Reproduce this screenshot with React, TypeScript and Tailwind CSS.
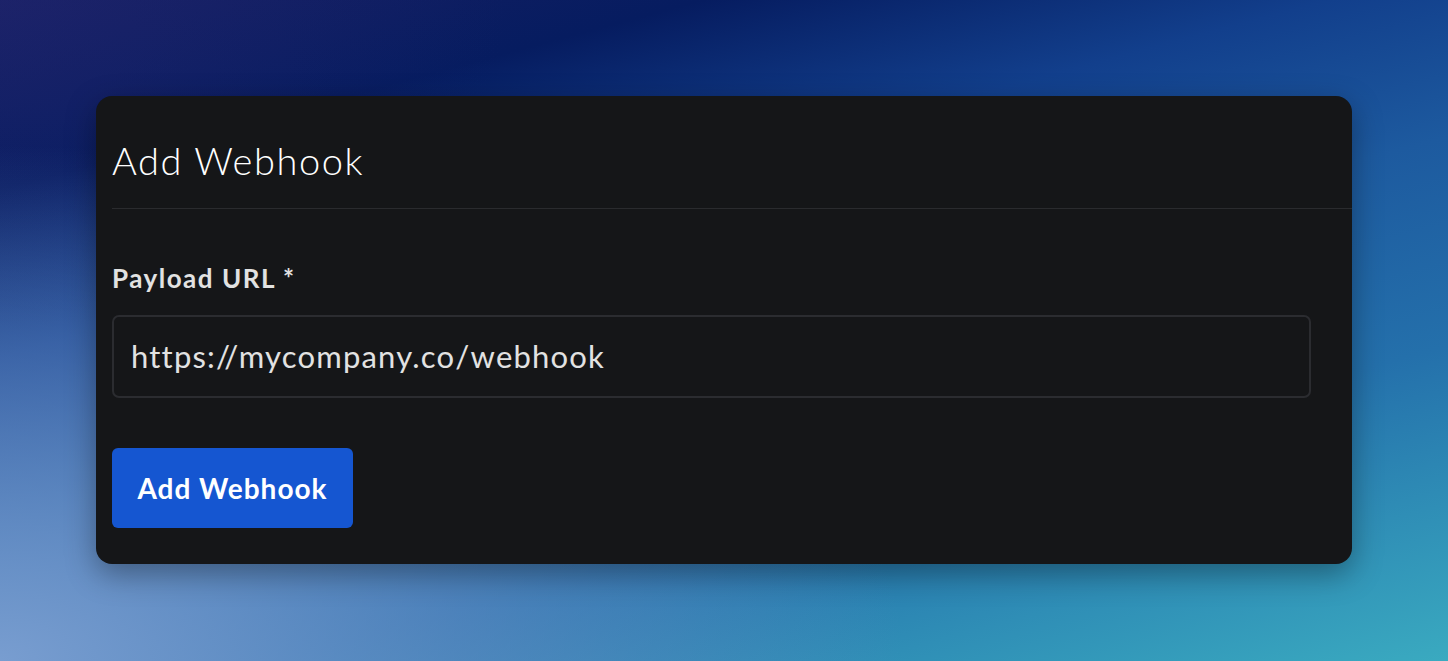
import React from "react";

export default function App() {
  return (
    <div
      className="w-[1448px] h-[661px] overflow-hidden flex items-start justify-center px-[96px] pt-[96px] bg-[radial-gradient(ellipse_80%_100%_at_0%_100%,rgba(125,160,210,0.95)_0%,rgba(110,145,200,0.55)_40%,rgba(100,130,190,0)_78%),radial-gradient(ellipse_35%_50%_at_0%_0%,rgba(35,40,115,0.4)_0%,rgba(35,40,115,0)_100%),linear-gradient(165deg,#181f63_0%,#061c60_18%,#123f8c_34%,#1d5a9f_50%,#2470ab_70%,#2f8eb6_85%,#3aaac0_100%)]"
      style={{ fontFamily: "Lato, 'Noto Sans', sans-serif" }}
    >
      <div className="w-full h-[468px] bg-[#151618] rounded-[16px] shadow-[0_10px_30px_rgba(0,0,0,0.35)] flex flex-col">
        <div className="ml-4 h-[113px] pt-4 flex items-center border-b border-[#2a2b2e]">
          <h1 className="text-[38px] font-light text-white leading-none tracking-[1.6px]">
            Add Webhook
          </h1>
        </div>
        <div className="pl-4 pr-[41px] pt-[54px] flex flex-col">
          <label className="text-[26px] font-bold text-[#e2e2e2] leading-[30px] tracking-[1.5px]">
            Payload URL *
          </label>
          <div className="mt-[22px] h-[83px] border-2 border-[#2b2c30] rounded-[7px] flex items-center px-[17px]">
            <span className="text-[31px] text-[#e2e2e2] tracking-[1.2px]">
              https://mycompany.co/webhook
            </span>
          </div>
          <button className="mt-[50px] w-[241px] h-[80px] bg-[#1556d1] rounded-[6px] text-white text-[28px] font-bold tracking-[1px] flex items-center justify-center">
            Add Webhook
          </button>
        </div>
      </div>
    </div>
  );
}
